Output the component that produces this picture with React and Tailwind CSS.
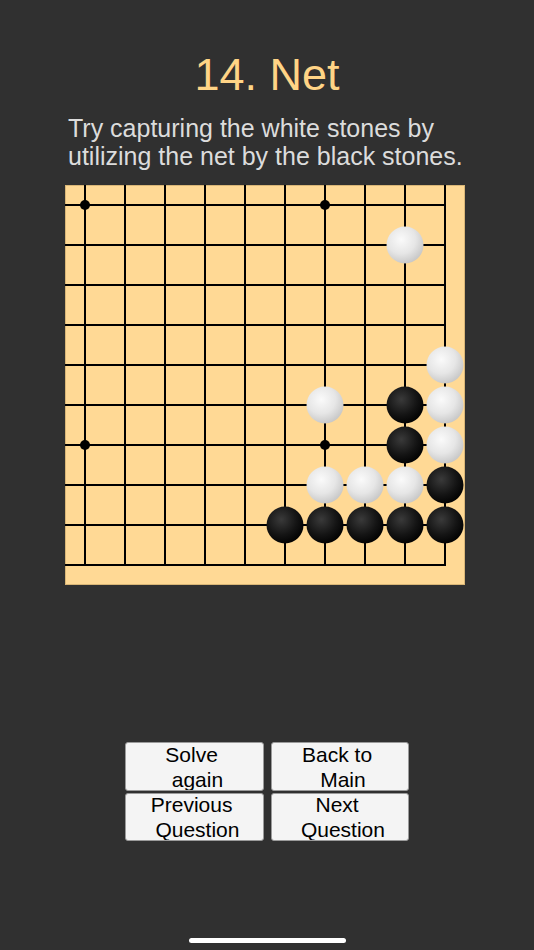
import React from 'react';

// local board coords: grid starts at 20, step 40, board 400x400
const whiteStones = [
  [340, 60], [380, 180], [380, 220], [380, 260],
  [260, 220], [260, 300], [300, 300], [340, 300],
];
const blackStones = [
  [340, 220], [340, 260], [380, 300],
  [220, 340], [260, 340], [300, 340], [340, 340], [380, 340],
];
const hoshi = [[20, 20], [260, 20], [20, 260], [260, 260]];
const lines = [20, 60, 100, 140, 180, 220, 260, 300, 340, 380];

const Board = () => (
  <svg width="400" height="400" viewBox="0 0 400 400" className="block">
    <defs>
      <radialGradient id="whiteStone" cx="0.4" cy="0.35" r="0.7">
        <stop offset="0%" stopColor="#fafafa" />
        <stop offset="55%" stopColor="#e6e6e6" />
        <stop offset="100%" stopColor="#c4c4c4" />
      </radialGradient>
      <radialGradient id="blackStone" cx="0.4" cy="0.35" r="0.7">
        <stop offset="0%" stopColor="#3a3a3a" />
        <stop offset="60%" stopColor="#141414" />
        <stop offset="100%" stopColor="#000000" />
      </radialGradient>
    </defs>
    <rect x="0.5" y="0.5" width="399" height="399" fill="#ffd995" stroke="#d9b677" strokeWidth="1" />
    {lines.map((p) => (
      <line key={'v' + p} x1={p} y1="0" x2={p} y2="381" stroke="#000" strokeWidth="2" />
    ))}
    {lines.map((p) => (
      <line key={'h' + p} x1="0" y1={p} x2="381" y2={p} stroke="#000" strokeWidth="2" />
    ))}
    {hoshi.map(([x, y]) => (
      <circle key={'s' + x + y} cx={x} cy={y} r="5" fill="#000" />
    ))}
    {whiteStones.map(([x, y]) => (
      <circle key={'w' + x + y} cx={x} cy={y} r="18.5" fill="url(#whiteStone)" />
    ))}
    {blackStones.map(([x, y]) => (
      <circle key={'b' + x + y} cx={x} cy={y} r="18.5" fill="url(#blackStone)" />
    ))}
  </svg>
);

const MenuButton = ({ label, className }) => (
  <button
    className={`flex items-center justify-center bg-[#f4f4f4] border border-[#9a9a9a] rounded-[3px] text-black text-[21px] leading-[25px] whitespace-pre text-center overflow-hidden ${className}`}
  >
    {label}
  </button>
);

export default function App() {
  return (
    <div
      className="w-[534px] h-[950px] bg-[#303030] flex flex-col items-center overflow-hidden"
      style={{ fontFamily: '"Liberation Sans", Arial, sans-serif' }}
    >
      <h1 className="mt-[52px] text-[45px] leading-[45px] text-[#ffd486]">14. Net</h1>
      <div className="w-[404px]">
        <p className="mt-[17px] pl-[3px] text-[25px] leading-[28px] text-[#dcdcdc]">
          Try capturing the white stones by utilizing the net by the black stones.
        </p>
        <div className="mt-[15px] w-[400px]">
          <Board />
        </div>
      </div>
      <div className="mt-[157px] grid grid-cols-[139px_138px] gap-x-[7px] gap-y-[2px]">
        <MenuButton label={'Solve \n again'} className="h-[49px]" />
        <MenuButton label={'Back to \n Main'} className="h-[49px]" />
        <MenuButton label={'Previous \n Question'} className="h-[48px]" />
        <MenuButton label={'Next \n Question'} className="h-[48px]" />
      </div>
      <div className="mt-auto mb-[7px] w-[157px] h-[5px] rounded-full bg-white" />
    </div>
  );
}
